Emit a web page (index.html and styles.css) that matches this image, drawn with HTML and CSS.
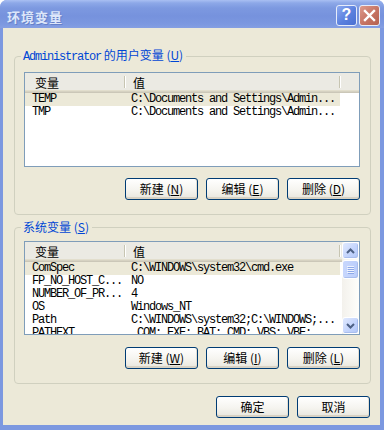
FILE: index.html
```html
<!DOCTYPE html>
<html lang="zh-CN">
<head>
    <meta charset="UTF-8">
    <title>环境变量</title>
    <link rel="stylesheet" href="styles.css">
</head>
<body>
    <div class="window">
        <!-- Title bar -->
        <div class="titlebar">
            <span class="title">环境变量</span>
            <div class="caption-buttons">
                <button class="cap-btn help">?</button>
                <button class="cap-btn close">
                    <svg width="13" height="13" viewBox="0 0 13 13"><path d="M2 2 L11 11 M11 2 L2 11" stroke="#fff" stroke-width="2.4" stroke-linecap="square"/></svg>
                </button>
            </div>
        </div>

        <div class="client">
            <!-- User variables -->
            <fieldset class="group user-group">
                <legend><span class="mono">Administrator</span> 的用户变量 (<u>U</u>)</legend>
                <div class="listview user-list">
                    <div class="lv-main">
                        <div class="lv-header">
                            <div class="col c1">变量</div>
                            <div class="col c2">值</div>
                            <div class="col c3"></div>
                        </div>
                        <div class="lv-row selected"><span class="c1">TEMP</span><span class="c2">C:\Documents and Settings\Admin...</span></div>
                        <div class="lv-row"><span class="c1">TMP</span><span class="c2">C:\Documents and Settings\Admin...</span></div>
                    </div>
                </div>
                <div class="btn-row">
                    <button class="btn">新建 (<u>N</u>)</button>
                    <button class="btn">编辑 (<u>E</u>)</button>
                    <button class="btn">删除 (<u>D</u>)</button>
                </div>
            </fieldset>

            <!-- System variables -->
            <fieldset class="group sys-group">
                <legend>系统变量 (<u>S</u>)</legend>
                <div class="listview sys-list">
                    <div class="lv-main">
                        <div class="lv-header">
                            <div class="col c1">变量</div>
                            <div class="col c2">值</div>
                            <div class="col c3"></div>
                        </div>
                        <div class="lv-row selected"><span class="c1">ComSpec</span><span class="c2">C:\WINDOWS\system32\cmd.exe</span></div>
                        <div class="lv-row"><span class="c1">FP_NO_HOST_C...</span><span class="c2">NO</span></div>
                        <div class="lv-row"><span class="c1">NUMBER_OF_PR...</span><span class="c2">4</span></div>
                        <div class="lv-row"><span class="c1">OS</span><span class="c2">Windows_NT</span></div>
                        <div class="lv-row"><span class="c1">Path</span><span class="c2">C:\WINDOWS\system32;C:\WINDOWS;...</span></div>
                        <div class="lv-row"><span class="c1">PATHEXT</span><span class="c2">.COM;.EXE;.BAT;.CMD;.VBS;.VBE;...</span></div>
                    </div>
                    <div class="scrollbar">
                        <div class="sb-btn">
                            <svg width="9" height="6" viewBox="0 0 9 6"><path d="M1 5 L4.5 1.5 L8 5" fill="none" stroke="#4D6185" stroke-width="2"/></svg>
                        </div>
                        <div class="sb-thumb">
                            <svg width="7" height="8" viewBox="0 0 7 8"><path d="M0 0.5 H7 M0 2.5 H7 M0 4.5 H7 M0 6.5 H7" stroke="#EEF3FE" stroke-width="1"/><path d="M1 1.5 H7 M1 3.5 H7 M1 5.5 H7 M1 7.5 H7" stroke="#8DA8E8" stroke-width="1"/></svg>
                        </div>
                        <div class="sb-track"></div>
                        <div class="sb-btn">
                            <svg width="9" height="6" viewBox="0 0 9 6"><path d="M1 1 L4.5 4.5 L8 1" fill="none" stroke="#4D6185" stroke-width="2"/></svg>
                        </div>
                    </div>
                </div>
                <div class="btn-row">
                    <button class="btn">新建 (<u>W</u>)</button>
                    <button class="btn">编辑 (<u>I</u>)</button>
                    <button class="btn">删除 (<u>L</u>)</button>
                </div>
            </fieldset>

            <!-- Dialog buttons -->
            <div class="dialog-buttons">
                <button class="btn">确定</button>
                <button class="btn">取消</button>
            </div>
        </div>
    </div>
</body>
</html>
```

FILE: styles.css
```css
/* General Styles */
* {
    box-sizing: border-box;
}

body {
    margin: 0;
    background: #ffffff;
    font-family: "Noto Sans CJK SC", sans-serif;
    font-size: 12px;
    color: #000;
}

.mono,
.lv-row {
    font-family: "Liberation Mono", "Noto Sans CJK SC", monospace;
    font-size: 12px;
    letter-spacing: -1.2px;
}

/* Window frame */
.window {
    width: 384px;
    height: 430px;
    display: flex;
    flex-direction: column;
    background: #7C98E0;
    border-radius: 7px 7px 0 0;
    overflow: hidden;
}

.titlebar {
    height: 28px;
    flex: none;
    display: flex;
    align-items: center;
    justify-content: space-between;
    padding: 0 4px 0 7px;
    background: linear-gradient(#A9BFF2 0, #8DA8E8 3px, #7D99E0 8px, #7692DD 16px, #7C98E0 24px, #859FE2 28px);
}

.title {
    margin-top: 6px;
    color: #DCE6FA;
    font-weight: bold;
    font-size: 13px;
    letter-spacing: 1px;
    line-height: 16px;
    text-shadow: 1px 1px #6680C8;
}

.caption-buttons {
    display: flex;
    gap: 2px;
    margin-top: 2px;
}

.cap-btn {
    width: 21px;
    height: 21px;
    padding: 0;
    border: 1px solid #E6ECFA;
    border-radius: 3px;
    display: flex;
    align-items: center;
    justify-content: center;
    color: #fff;
    font-family: "Liberation Sans", sans-serif;
    font-weight: bold;
    font-size: 16px;
    line-height: 1;
}

.cap-btn.help {
    background: linear-gradient(135deg, #8CA9F0, #5A80DE 55%, #4A6FD2);
}

.cap-btn.close {
    background: linear-gradient(135deg, #DD9A8C, #C57363 55%, #B5614F);
}

/* Client area */
.client {
    flex: 1;
    margin: 0 4px 5px 3px;
    padding: 20px 9px 0 11px;
    background: #ECE9D8;
    display: flex;
    flex-direction: column;
}

.group {
    margin: 0;
    min-width: 0;
    border: 1px solid #D0D0BF;
    border-radius: 4px;
    padding: 8px 10px 14px 9px;
}

.sys-group {
    margin-top: 5px;
    padding-top: 7px;
}

.group legend {
    margin-left: -3px;
    padding: 0 3px 0 2px;
    color: #0046D5;
    font-size: 12px;
    line-height: 14px;
}

/* List view */
.listview {
    border: 1px solid #7F9DB9;
    background: #ffffff;
    display: flex;
    overflow: hidden;
}

.user-list {
    height: 95px;
}

.sys-list {
    height: 94px;
}

.lv-main {
    flex: 1;
    min-width: 0;
    display: flex;
    flex-direction: column;
}

.lv-header {
    height: 20px;
    flex: none;
    display: flex;
    background: #EBEAE3;
    box-shadow: inset 0 -1px #CBC7B8, inset 0 -2px #D6D2C2, inset 0 -3px #E2DECD;
}

.lv-header .col {
    position: relative;
    line-height: 19px;
    white-space: nowrap;
}

.lv-header .c1 {
    width: 100px;
    padding-left: 10px;
}

.lv-header .c2 {
    width: 215px;
    padding-left: 8px;
}

.lv-header .c3 {
    flex: 1;
}

.lv-header .c1::after,
.lv-header .c2::after {
    content: "";
    position: absolute;
    right: 0;
    top: 3px;
    bottom: 5px;
    width: 1px;
    background: #C7C5B2;
    box-shadow: 1px 0 #ffffff;
}

.lv-row {
    display: flex;
    width: 315px;
    height: 13px;
    flex: none;
    line-height: 13px;
    white-space: nowrap;
}

.lv-row.selected {
    background: #ECE9D8;
}

.lv-row .c1 {
    width: 100px;
    padding-left: 7px;
    overflow: hidden;
}

.lv-row .c2 {
    width: 215px;
    padding-left: 6px;
    overflow: hidden;
}

/* Scrollbar */
.scrollbar {
    width: 17px;
    flex: none;
    display: flex;
    flex-direction: column;
    background: linear-gradient(to right, #F3F1EC, #FEFEFB);
}

.sb-btn {
    height: 17px;
    flex: none;
    display: flex;
    align-items: center;
    justify-content: center;
    border: 1px solid #FFFFFF;
    border-radius: 3px;
    background: linear-gradient(135deg, #E0E9FE, #C2D3FC 60%, #B1C7F7);
    box-shadow: inset -1px -1px #A9BEEE;
}

.sb-thumb {
    height: 19px;
    flex: none;
    margin-top: 1px;
    display: flex;
    align-items: center;
    justify-content: center;
    border: 1px solid #FFFFFF;
    border-radius: 3px;
    background: linear-gradient(to right, #C8D7FD, #BBCEFB);
    box-shadow: inset -1px -1px #A9BEEE;
}

.sb-track {
    flex: 1;
}

/* Buttons */
.btn-row {
    display: flex;
    justify-content: flex-end;
    gap: 8px;
    margin-top: 11px;
}

.sys-group .btn-row {
    margin-top: 12px;
}

.btn {
    width: 73px;
    height: 22px;
    padding: 0;
    border: 1px solid #003C74;
    border-radius: 3px;
    background: linear-gradient(#FFFFFF, #F5F4EF 55%, #E8E6DD);
    box-shadow: inset 0 -2px #D8D2C4, inset -1px 0 #E3DFD3;
    font-family: "Noto Sans CJK SC", sans-serif;
    font-size: 12px;
    line-height: 18px;
    color: #000;
}

.dialog-buttons {
    display: flex;
    justify-content: flex-end;
    gap: 8px;
    margin-top: 12px;
    padding-right: 1px;
}
```
